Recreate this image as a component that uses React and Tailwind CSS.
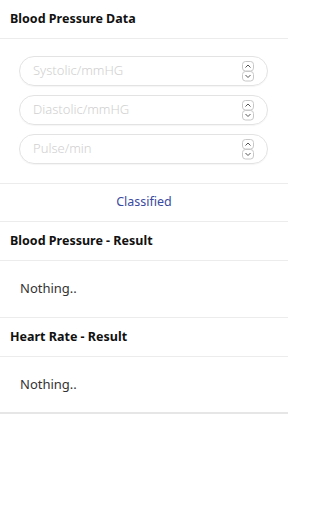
import React from "react";

const Spinner = () => (
  <svg width="12" height="21" viewBox="0 0 12 21" className="shrink-0">
    <rect x="0.5" y="0.5" width="11" height="9.5" rx="3" fill="none" stroke="#c8c8c8" />
    <rect x="0.5" y="10.5" width="11" height="9.5" rx="3" fill="none" stroke="#c8c8c8" />
    <path d="M3.5 6.5 L6 4 L8.5 6.5" fill="none" stroke="#555" strokeWidth="1" />
    <path d="M3.5 14 L6 16.5 L8.5 14" fill="none" stroke="#555" strokeWidth="1" />
  </svg>
);

const CampoNumero = ({ placeholder }) => (
  <div className="flex h-[30px] items-center rounded-full border border-[#e3e3e3] pl-[13px] pr-[13px] shadow-[0_1px_1px_rgba(0,0,0,0.04)]">
    <input
      type="text"
      placeholder={placeholder}
      className="min-w-0 flex-1 bg-transparent text-[13px] font-light text-[#333] outline-none placeholder:text-[#d0d0d0]"
    />
    <Spinner />
  </div>
);

const Encabezado = ({ children }) => (
  <div className="flex h-[39px] items-center border-b border-[#ececec] px-[10px]">
    <h3 className="text-[12.5px] font-bold text-[#111]">{children}</h3>
  </div>
);

export default function App() {
  return (
    <div className="min-h-[512px] w-[288px] bg-white" style={{ fontFamily: '"Noto Sans", "Open Sans", sans-serif' }}>
      <Encabezado>Blood Pressure Data</Encabezado>
      <div className="flex flex-col gap-[9px] border-b border-[#ececec] pt-[17px] pb-[19px] pl-[19px] pr-[20px]">
        <CampoNumero placeholder="Systolic/mmHG" />
        <CampoNumero placeholder="Diastolic/mmHG" />
        <CampoNumero placeholder="Pulse/min" />
      </div>
      <div className="flex h-[38px] items-center justify-center border-b border-[#ececec]">
        <button className="text-[12.5px] text-[#3b4a9e]">Classified</button>
      </div>
      <Encabezado>Blood Pressure - Result</Encabezado>
      <div className="flex h-[57px] items-center border-b border-[#ececec] px-[20px]">
        <p className="text-[13px] text-[#333]">Nothing..</p>
      </div>
      <Encabezado>Heart Rate - Result</Encabezado>
      <div className="flex h-[57px] items-center border-b-2 border-[#e6e6e6] px-[20px]">
        <p className="text-[13px] text-[#333]">Nothing..</p>
      </div>
    </div>
  );
}
